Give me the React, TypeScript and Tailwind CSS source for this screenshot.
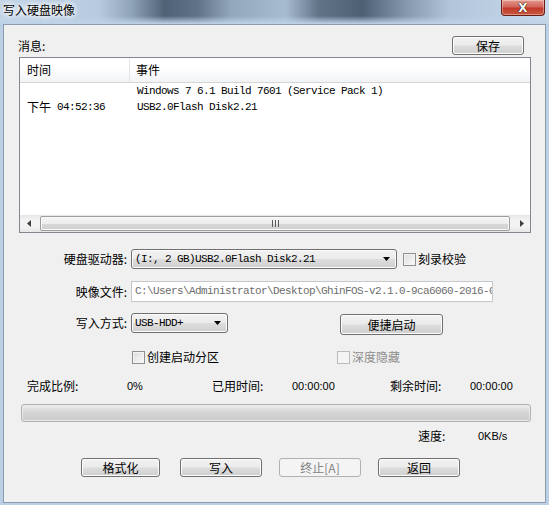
import type { ReactNode } from 'react';

const cjk = "font-['SimSun','Noto_Sans_CJK_SC',sans-serif]";
const mono = "font-['Liberation_Mono','Noto_Sans_CJK_SC',monospace] text-[11px] tracking-[-0.6px]";
const btnFace =
    'border border-[#707070] rounded-[3px] bg-[linear-gradient(#f2f2f2_0%,#ebebeb_48%,#dddddd_52%,#cfcfcf_100%)] shadow-[inset_0_0_0_1px_#fcfcfc]';

function WinButton({ children, w, disabled }: { children: ReactNode; w: string; disabled?: boolean }) {
    return (
        <div
            className={`flex h-[19px] items-center justify-center text-[12px] ${cjk} ${w} ${
                disabled
                    ? 'rounded-[3px] border border-[#adb2b5] bg-[#f4f4f4] text-[#838383]'
                    : `${btnFace} text-black`
            }`}
        >
            {children}
        </div>
    );
}

function Combo({ text, w }: { text: string; w: string }) {
    return (
        <div className={`flex h-[20px] items-center justify-between pl-[3px] pr-[6px] ${btnFace} ${w}`}>
            <span className={`${mono} text-black`}>{text}</span>
            <svg width="7" height="4" viewBox="0 0 7 4">
                <path d="M0 0h7L3.5 4z" fill="#000" />
            </svg>
        </div>
    );
}

function Check({ label, disabled }: { label: string; disabled?: boolean }) {
    return (
        <div className="flex items-center gap-[2px]">
            <div
                className={`h-[13px] w-[13px] border ${
                    disabled
                        ? 'border-[#bcbcbc] bg-[#f4f4f4]'
                        : 'border-[#8e8f8f] bg-[linear-gradient(135deg,#dcdcdc,#fbfbfb)] shadow-[inset_0_0_0_1px_#f4f4f4]'
                }`}
            />
            <span className={`text-[12px] leading-[16px] ${cjk} ${disabled ? 'text-[#8d8d8d]' : 'text-black'}`}>{label}</span>
        </div>
    );
}

export default function App() {
    return (
        <div className="relative h-[505px] w-[549px] overflow-hidden bg-[#bcd0e5]">
            {/* title bar */}
            <div className="relative h-[24px] bg-[linear-gradient(90deg,#c4d5e8_0%,#b7cadf_18%,#8fa3b8_24%,#4f6276_30%,#5f7287_36%,#93a7bc_42%,#a8bcd1_52%,#617488_58%,#4d6074_66%,#8598ad_74%,#b2c5da_82%,#c9daec_100%)]">
                <div className="absolute inset-x-0 bottom-0 h-[8px] bg-[linear-gradient(rgba(188,208,229,0),#bfd3e8)]" />
                <div className={`absolute left-[3px] top-[3px] text-[12px] leading-[14px] text-black ${cjk} [text-shadow:0_0_6px_#fff,0_0_6px_#fff,0_0_4px_#fff]`}>
                    写入硬盘映像
                </div>
                <div className="absolute right-[4px] top-0 flex h-[16px] w-[44px] items-center justify-center rounded-b-[4px] border border-t-0 border-[#6b1d14] bg-[linear-gradient(#e49a8c_0%,#d2645a_45%,#c3382a_55%,#c85a40_100%)] shadow-[inset_0_0_0_1px_rgba(255,255,255,0.35)]">
                    <span className="font-['DejaVu_Sans',sans-serif] text-[12px] font-bold leading-[12px] text-white [text-shadow:0_0_1px_#000,0_0_1px_#000]">
                        X
                    </span>
                </div>
            </div>

            {/* client area */}
            <div className="ml-[3px] flex h-[479px] w-[543px] flex-col border border-[#8c9cad] bg-[#f0f0f0]">
                <div className="mt-[11px] flex h-[19px] items-center pl-[14px] pr-[21px]">
                    <span className={`text-[12px] text-black ${cjk}`}>消息:</span>
                    <div className="ml-auto">
                        <WinButton w="w-[72px]">保存</WinButton>
                    </div>
                </div>

                {/* message list */}
                <div className="ml-[15px] mt-[2px] flex h-[176px] w-[512px] flex-col border border-[#828790] bg-white">
                    <div className={`flex h-[25px] border-b border-[#d5d5d5] bg-[linear-gradient(#ffffff_0%,#ffffff_40%,#f2f3f5_100%)] text-[12px] text-black ${cjk}`}>
                        <div className="flex w-[110px] items-center border-r border-[#e3e5e8] pl-[7px]">时间</div>
                        <div className="flex items-center pl-[6px]">事件</div>
                    </div>
                    <div className="flex-1 text-black">
                        <div className="flex h-[16px] items-center">
                            <div className="w-[117px]" />
                            <span className={mono}>Windows 7 6.1 Build 7601 (Service Pack 1)</span>
                        </div>
                        <div className="flex h-[16px] items-center">
                            <div className="flex w-[117px] items-center pl-[7px]">
                                <span className={`text-[12px] ${cjk}`}>下午</span>
                                <span className={`${mono} ml-[6px]`}>04:52:36</span>
                            </div>
                            <span className={mono}>USB2.0Flash Disk2.21</span>
                        </div>
                    </div>
                    {/* horizontal scrollbar */}
                    <div className="flex h-[17px] items-center bg-[linear-gradient(#e6e6e6,#f3f3f3_30%,#f3f3f3_70%,#e6e6e6)]">
                        <div className="flex w-[17px] items-center justify-center">
                            <svg width="4" height="7" viewBox="0 0 4 7">
                                <path d="M4 0v7L0 3.5z" fill="#404040" />
                            </svg>
                        </div>
                        <div className="ml-[3px] flex h-[15px] flex-1 items-center justify-center rounded-[2px] border border-[#9d9d9d] bg-[linear-gradient(#f6f6f6_0%,#ececec_50%,#d9d9d9_52%,#cfcfcf_100%)] shadow-[inset_0_0_0_1px_#fafafa]">
                            <svg width="7" height="7" viewBox="0 0 7 7">
                                <path d="M0.5 0v7M3.5 0v7M6.5 0v7" stroke="#5a5a5a" strokeWidth="1" />
                            </svg>
                        </div>
                        <div className="ml-[3px] flex w-[17px] items-center justify-center">
                            <svg width="4" height="7" viewBox="0 0 4 7">
                                <path d="M0 0v7L4 3.5z" fill="#404040" />
                            </svg>
                        </div>
                    </div>
                </div>

                {/* drive row */}
                <div className="mt-[16px] flex h-[20px] items-center">
                    <div className={`w-[123px] text-right text-[12px] text-black ${cjk}`}>硬盘驱动器:</div>
                    <div className="ml-[4px]">
                        <Combo text="(I:, 2 GB)USB2.0Flash Disk2.21" w="w-[266px]" />
                    </div>
                    <div className="ml-[6px]">
                        <Check label="刻录校验" />
                    </div>
                </div>

                {/* image file row */}
                <div className="mt-[12px] flex h-[21px] items-center">
                    <div className={`w-[123px] text-right text-[12px] text-black ${cjk}`}>映像文件:</div>
                    <div className="ml-[4px] flex h-[21px] w-[362px] items-center overflow-hidden border border-[#c5c8cc] bg-white pl-[3px]">
                        <span className={`${mono} whitespace-nowrap text-[#6d6d6d]`}>
                            C:\Users\Administrator\Desktop\GhinFOS-v2.1.0-9ca6060-2016-08
                        </span>
                    </div>
                </div>

                {/* write mode row */}
                <div className="mt-[11px] flex h-[21px] items-start">
                    <div className={`flex h-[20px] w-[123px] items-center justify-end text-[12px] text-black ${cjk}`}>写入方式:</div>
                    <div className="ml-[4px]">
                        <Combo text="USB-HDD+" w="w-[97px]" />
                    </div>
                    <div className="ml-[112px] mt-[1px]">
                        <WinButton w="w-[103px] h-[21px]">便捷启动</WinButton>
                    </div>
                </div>

                {/* checkbox row */}
                <div className="mt-[15px] flex h-[16px] items-center pl-[128px]">
                    <Check label="创建启动分区" />
                    <div className="ml-[118px]">
                        <Check label="深度隐藏" disabled />
                    </div>
                </div>

                {/* stats row */}
                <div className={`mt-[13px] flex h-[16px] items-center pl-[23px] text-[12px] text-black ${cjk}`}>
                    <span className="w-[100px]">完成比例:</span>
                    <span className="w-[85px] font-['Liberation_Sans',sans-serif] text-[11px]">0%</span>
                    <span className="w-[80px]">已用时间:</span>
                    <span className="w-[98px] font-['Liberation_Sans',sans-serif] text-[11px]">00:00:00</span>
                    <span className="w-[80px]">剩余时间:</span>
                    <span className="font-['Liberation_Sans',sans-serif] text-[11px]">00:00:00</span>
                </div>

                {/* progress bar */}
                <div className="ml-[17px] mt-[10px] h-[18px] w-[510px] rounded-[3px] border border-[#b2b2b2] bg-[linear-gradient(#f3f3f3_0%,#e2e2e2_20%,#d3d3d3_50%,#cbcbcb_100%)] shadow-[inset_0_0_0_1px_#e9e9e9]" />

                {/* speed row */}
                <div className={`mt-[6px] flex h-[16px] items-center pl-[414px] text-[12px] text-black ${cjk}`}>
                    <span className="w-[60px]">速度:</span>
                    <span className="font-['Liberation_Sans',sans-serif] text-[11px]">0KB/s</span>
                </div>

                {/* buttons */}
                <div className="mt-[14px] flex pl-[77px]">
                    <WinButton w="w-[79px]">格式化</WinButton>
                    <div className="ml-[20px]">
                        <WinButton w="w-[82px]">写入</WinButton>
                    </div>
                    <div className="ml-[17px]">
                        <WinButton w="w-[82px]" disabled>
                            终止[A]
                        </WinButton>
                    </div>
                    <div className="ml-[17px]">
                        <WinButton w="w-[82px]">返回</WinButton>
                    </div>
                </div>
            </div>
        </div>
    );
}
